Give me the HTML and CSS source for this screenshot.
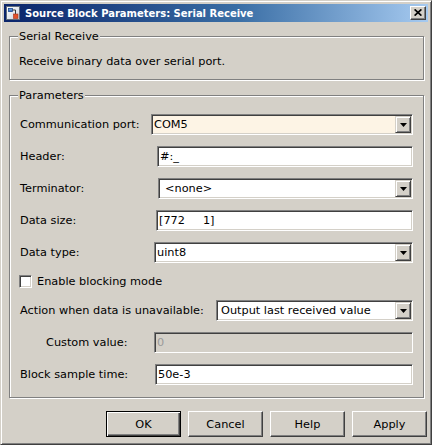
FILE: index.html
```html
<!DOCTYPE html>
<html lang="en">
<head>
<meta charset="utf-8">
<title>Source Block Parameters: Serial Receive</title>
<link rel="stylesheet" href="styles.css">
</head>
<body>
<div class="window">
  <div class="titlebar">
    <svg class="app-icon" width="16" height="16" viewBox="0 0 16 16" aria-hidden="true">
      <defs>
        <linearGradient id="icoBg" x1="0" y1="0" x2="1" y2="1">
          <stop offset="0" stop-color="#ffffff"/>
          <stop offset="1" stop-color="#c9d2de"/>
        </linearGradient>
        <linearGradient id="icoBlue" x1="0" y1="0" x2="0" y2="1">
          <stop offset="0" stop-color="#7fb2ec"/>
          <stop offset="1" stop-color="#2a64b8"/>
        </linearGradient>
      </defs>
      <rect x="1.5" y="1.5" width="13" height="13" fill="url(#icoBg)" stroke="#5f6b7a"/>
      <rect x="3.5" y="3.5" width="4" height="3" fill="url(#icoBlue)" stroke="#1d4a92" stroke-width="0.8"/>
      <path d="M7.5 5H10.5V9" fill="none" stroke="#3a3a3a" stroke-width="1"/>
      <rect x="8.5" y="9" width="4.5" height="4.5" fill="#e2522a" stroke="#a8331a" stroke-width="0.6"/>
    </svg>
    <span class="title">Source Block Parameters: Serial Receive</span>
    <div class="close" role="button" aria-label="Close">
      <svg width="8" height="7" viewBox="0 0 8 7" aria-hidden="true">
        <path d="M0.6 0.4L7.4 6.6M7.4 0.4L0.6 6.6" stroke="#000" stroke-width="1.7" fill="none"/>
      </svg>
    </div>
  </div>

  <fieldset class="group group-desc">
    <legend>Serial Receive</legend>
    <p class="desc">Receive binary data over serial port.</p>
  </fieldset>

  <fieldset class="group group-params">
    <legend>Parameters</legend>
    <div class="rows">
      <div class="row row-port">
        <span class="lbl">Communication port:</span>
        <div class="combo combo-focus">
          <span class="val">COM5</span>
          <span class="drop"><svg width="7" height="4" viewBox="0 0 7 4" aria-hidden="true"><polygon points="0,0 7,0 3.5,4" fill="#000"/></svg></span>
        </div>
      </div>
      <div class="row row-header">
        <span class="lbl">Header:</span>
        <input class="field" type="text" value="#:_">
      </div>
      <div class="row row-term">
        <span class="lbl">Terminator:</span>
        <div class="combo combo-term">
          <span class="val">&lt;none&gt;</span>
          <span class="drop"><svg width="7" height="4" viewBox="0 0 7 4" aria-hidden="true"><polygon points="0,0 7,0 3.5,4" fill="#000"/></svg></span>
        </div>
      </div>
      <div class="row row-size">
        <span class="lbl">Data size:</span>
        <input class="field" type="text" value="[772     1]">
      </div>
      <div class="row row-type">
        <span class="lbl">Data type:</span>
        <div class="combo">
          <span class="val">uint8</span>
          <span class="drop"><svg width="7" height="4" viewBox="0 0 7 4" aria-hidden="true"><polygon points="0,0 7,0 3.5,4" fill="#000"/></svg></span>
        </div>
      </div>
      <div class="row row-check">
        <input class="check" type="checkbox" id="blocking">
        <label for="blocking">Enable blocking mode</label>
      </div>
      <div class="row row-action">
        <span class="lbl">Action when data is unavailable:</span>
        <div class="combo combo-action">
          <span class="val">Output last received value</span>
          <span class="drop"><svg width="7" height="4" viewBox="0 0 7 4" aria-hidden="true"><polygon points="0,0 7,0 3.5,4" fill="#000"/></svg></span>
        </div>
      </div>
      <div class="row row-custom">
        <span class="lbl">Custom value:</span>
        <input class="field field-disabled" type="text" value="0" disabled>
      </div>
      <div class="row row-sample">
        <span class="lbl">Block sample time:</span>
        <input class="field" type="text" value="50e-3">
      </div>
    </div>
  </fieldset>

  <div class="buttons">
    <button class="btn btn-default" type="button">OK</button>
    <button class="btn" type="button">Cancel</button>
    <button class="btn" type="button">Help</button>
    <button class="btn" type="button">Apply</button>
  </div>
</div>
</body>
</html>
```

FILE: styles.css
```css
* {
  box-sizing: border-box;
}

html,
body {
  margin: 0;
  padding: 0;
}

body {
  font: 11.3px/13px "DejaVu Sans", "Liberation Sans", sans-serif;
  color: #000;
  background: #d4d0c8;
}

/* ---------- window frame ---------- */
.window {
  width: 432px;
  height: 445px;
  display: flex;
  flex-direction: column;
  background: #d4d0c8;
  border: 1px solid;
  border-color: #d4d0c8 #404040 #404040 #d4d0c8;
  box-shadow: inset 1px 1px #ffffff, inset -1px -1px #808080;
  padding: 3px;
}

/* ---------- title bar ---------- */
.titlebar {
  flex: none;
  height: 18px;
  display: flex;
  align-items: center;
  padding: 0 2px 0 1px;
  background: linear-gradient(to right, #0a246a 0%, #3a6ea5 55%, #a6caf0 100%);
  color: #fff;
}

.app-icon {
  flex: none;
  margin-right: 4px;
}

.title {
  flex: 1;
  font-family: "DejaVu Sans Condensed", "DejaVu Sans", sans-serif;
  font-stretch: condensed;
  font-size: 11.1px;
  font-weight: bold;
  white-space: nowrap;
  overflow: hidden;
}

.close {
  flex: none;
  width: 16px;
  height: 14px;
  display: flex;
  align-items: center;
  justify-content: center;
  background: #d4d0c8;
  border: 1px solid;
  border-color: #ffffff #404040 #404040 #ffffff;
  box-shadow: inset -1px -1px #808080;
  padding: 0 1px 1px 0;
}

/* ---------- group boxes ---------- */
.group {
  min-width: 0;
  margin: 8px 4px 0 5px;
  border: 1px solid #808080;
  box-shadow: inset 1px 1px #ffffff, 1px 1px #ffffff;
}

.group legend {
  line-height: 13px;
  padding: 0 1px;
  background: #d4d0c8;
}

.group-desc {
  padding: 12px 9px 11px 9px;
}

.group-desc legend {
  margin-left: -1px;
}

.desc {
  margin: 0;
}

.group-params {
  margin-top: 9px;
  padding: 12px 10px 12px 10px;
}

.group-params legend {
  margin-left: -2px;
}

/* ---------- parameter rows ---------- */
.rows {
  display: flex;
  flex-direction: column;
  gap: 11px;
}

.row {
  display: flex;
  align-items: center;
  height: 21px;
}

.lbl {
  flex: none;
  white-space: nowrap;
}

.row-port .lbl { width: 131px; }
.row-header .lbl { width: 137px; }
.row-term .lbl { width: 138px; }
.row-size .lbl { width: 136px; }
.row-type .lbl { width: 134px; }
.row-action .lbl { width: 196px; }
.row-custom .lbl { width: 134px; padding-left: 26px; }
.row-sample .lbl { width: 135px; }

.row-check {
  height: 15px;
  margin-left: -1px;
}

/* sunken edit field */
.field,
.combo {
  flex: 1;
  min-width: 0;
  height: 21px;
  border: 1px solid;
  border-color: #808080 #ffffff #ffffff #808080;
  box-shadow: inset 1px 1px #404040, inset -1px -1px #d4d0c8;
  background: #ffffff;
}

.field {
  font: inherit;
  color: #000;
  padding: 0 2px;
  margin: 0;
  outline: none;
}

.field-disabled {
  background: #d4d0c8;
  color: #9a9a9a;
}

/* combo box */
.combo {
  display: flex;
  align-items: center;
  padding: 1px;
}

.combo-focus {
  background: #fdf4e5;
}

.val {
  flex: 1;
  padding-left: 1px;
  white-space: nowrap;
  overflow: hidden;
}

.combo-term .val {
  padding-left: 5px;
}

.combo-action .val {
  padding-left: 3px;
}

.drop {
  flex: none;
  width: 16px;
  height: 17px;
  display: flex;
  align-items: center;
  justify-content: center;
  background: #d4d0c8;
  border: 1px solid;
  border-color: #d4d0c8 #404040 #404040 #d4d0c8;
  box-shadow: inset 1px 1px #ffffff, inset -1px -1px #808080;
  padding-top: 1px;
}

/* checkbox */
.check {
  -webkit-appearance: none;
  appearance: none;
  flex: none;
  width: 13px;
  height: 13px;
  margin: 0 5px 0 0;
  background: #ffffff;
  border: 1px solid;
  border-color: #808080 #ffffff #ffffff #808080;
  box-shadow: inset 1px 1px #404040, inset -1px -1px #d4d0c8;
}

/* ---------- dialog buttons ---------- */
.buttons {
  flex: none;
  display: flex;
  justify-content: flex-end;
  gap: 7px;
  margin-top: 13px;
  padding-right: 1px;
}

.btn {
  width: 75px;
  height: 26px;
  margin: 0;
  padding: 0;
  font: inherit;
  color: #000;
  background: #d4d0c8;
  border: 1px solid;
  border-color: #ffffff #404040 #404040 #ffffff;
  box-shadow: inset -1px -1px #808080;
}

.btn-default {
  border: 1px solid #000000;
  box-shadow: inset 1px 1px #ffffff, inset -1px -1px #404040, inset -2px -2px #808080;
}
```
